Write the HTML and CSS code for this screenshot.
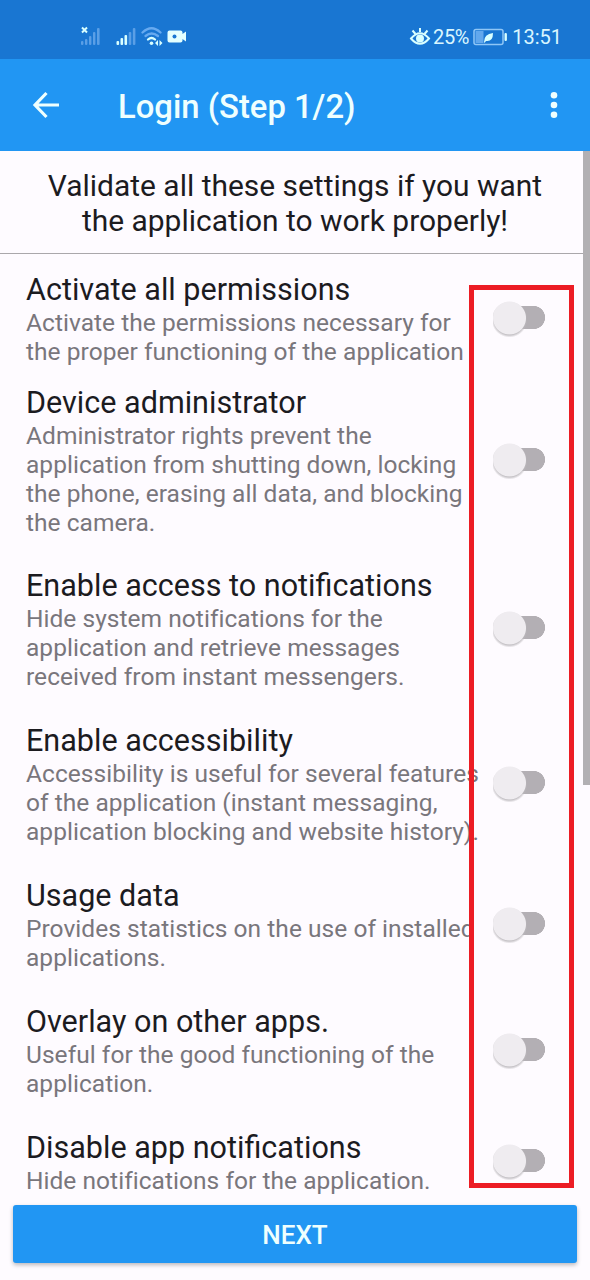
FILE: index.html
```html
<!DOCTYPE html>
<html lang="en">
<head>
<meta charset="utf-8">
<title>Login</title>
<link rel="stylesheet" href="styles.css">
</head>
<body>
<div class="screen">
  <header class="status">
    <svg class="status-left" width="110" height="28" viewBox="0 0 110 28" fill="none">
      <g stroke="#d9ffff" stroke-width="2"><path d="M2 3.500l5 5M7 3.500l-5 5"/></g>
      <g fill="#5a9fe6"><rect x="1" y="17" width="2.4" height="4" rx="1"/><rect x="5" y="15" width="2.4" height="6" rx="1"/><rect x="9" y="12" width="2.4" height="9" rx="1"/><rect x="13" y="8" width="2.4" height="13" rx="1"/><rect x="17" y="4" width="2.6" height="17" rx="1"/></g>
      <g fill="#d9ffff"><rect x="36.500" y="17" width="2.6" height="4" rx="1"/><rect x="40.500" y="14" width="2.600" height="7" rx="1"/><rect x="44.500" y="11" width="2.600" height="10" rx="1"/></g>
      <g fill="#5a9fe6"><rect x="48.700" y="8" width="2.600" height="13" rx="1"/><rect x="52.800" y="4" width="2.600" height="17" rx="1"/></g>
      <g stroke-width="2.300" stroke-linecap="round"><path d="M62.500 8.500Q71.500 0 80.500 8.500" stroke="#67aaf0"/><path d="M65.500 12Q71.500 7 78 12" stroke="#67aaf0"/><path d="M68 15.500Q71.500 12.500 75 15.500" stroke="#d9ffff"/></g>
      <circle cx="71.500" cy="19.300" r="1.800" fill="#d9ffff"/>
      <path d="M78 16v6l-3-3zM79.500 16v6l3-3z" fill="#d9ffff"/>
      <path d="M89.500 6.500h11q2 0 2 2v1.500l3.500-2.500v10L102.500 15v1.500q0 2-2 2h-11q-2 0-2-2V8.500q0-2 2-2z" fill="#e4ffff"/><circle cx="94.500" cy="12.500" r="2" fill="#1976d2"/>
    </svg>
    <div class="status-right">
      <svg width="22" height="22" viewBox="0 0 22 22" fill="none" stroke="#d9ffff" stroke-width="2"><path d="M2 12.500Q11 2 20 12.500Q11 23 2 12.500z"/><circle cx="11" cy="12.500" r="3" fill="#d9ffff"/><path d="M11 2v4M3.500 4.500l3 3.500M18.500 4.500l-3 3.500"/></svg>
      <span class="percent">25%</span>
      <svg class="battery" width="35" height="18" viewBox="0 0 35 18"><rect x="1" y="1.500" width="29" height="15" rx="2" fill="none" stroke="#8fc6f6" stroke-width="1.500"/><rect x="2.500" y="3" width="8" height="12" fill="#62a8ed"/><path d="M11 14q0-8 9-9q0 9-7 8l-1.500 2z" fill="#d9ffff"/><rect x="31.500" y="5" width="2.400" height="8" rx="1" fill="#d9ffff"/></svg>
      <span class="clock">13:51</span>
    </div>
  </header>
  <div class="toolbar">
    <svg class="back" width="28" height="28" viewBox="0 0 28 28" fill="none" stroke="#effffe" stroke-width="3.200"><path d="M14.500 2L3 14L14.500 26M3 14H27"/></svg>
    <h1 class="page-title">Login (Step 1/2)</h1>
    <svg class="more" width="8" height="28" viewBox="0 0 8 28" fill="#effffe"><circle cx="4" cy="4.200" r="3.300"/><circle cx="4" cy="14" r="3.300"/><circle cx="4" cy="23.800" r="3.300"/></svg>
  </div>
  <p class="intro">Validate all these settings if you want<br>the application to work properly!</p>
  <main class="settings">
    <section class="row tight"><div class="copy"><h2 class="name">Activate all permissions</h2><p class="desc">Activate the permissions necessary for<br>the proper functioning of the application</p></div><span class="switch"></span></section>
    <section class="row second"><div class="copy"><h2 class="name">Device administrator</h2><p class="desc">Administrator rights prevent the<br>application from shutting down, locking<br>the phone, erasing all data, and blocking<br>the camera.</p></div><span class="switch"></span></section>
    <section class="row"><div class="copy"><h2 class="name">Enable access to notifications</h2><p class="desc">Hide system notifications for the<br>application and retrieve messages<br>received from instant messengers.</p></div><span class="switch"></span></section>
    <section class="row"><div class="copy"><h2 class="name">Enable accessibility</h2><p class="desc">Accessibility is useful for several features<br>of the application (instant messaging,<br>application blocking and website history).</p></div><span class="switch"></span></section>
    <section class="row"><div class="copy"><h2 class="name">Usage data</h2><p class="desc">Provides statistics on the use of installed<br>applications.</p></div><span class="switch"></span></section>
    <section class="row"><div class="copy"><h2 class="name">Overlay on other apps.</h2><p class="desc">Useful for the good functioning of the<br>application.</p></div><span class="switch"></span></section>
    <section class="row"><div class="copy"><h2 class="name">Disable app notifications</h2><p class="desc">Hide notifications for the application.</p></div><span class="switch"></span></section>
  </main>
  <button class="next">NEXT</button>
  <div class="scrollbar"></div>
  <div class="highlight"></div>
</div>
</body>
</html>
```
FILE: styles.css
```css
* { box-sizing: border-box; margin: 0; padding: 0; }
body { font-family: Roboto, sans-serif; background: #fefbff; }
.screen { position: relative; width: 590px; height: 1280px; overflow: hidden; display: flex; flex-direction: column; color: #1c1b1f; }
.status { height: 59px; flex: none; background: #1976d2; display: flex; justify-content: space-between; align-items: flex-start; padding: 24px 28px 0 80px; color: #d9f6ff; }
.status-right { display: flex; align-items: center; height: 26px; font-size: 20px; }
.percent { margin-left: 2px; letter-spacing: -0.3px; }
.battery { margin: 0 4px; }
.toolbar { height: 92px; flex: none; background: #2196f3; display: flex; align-items: center; padding: 0 32px; }
.page-title { flex: 1; margin-left: 58px; padding-top: 3px; font-size: 32.8px; font-weight: 500; line-height: 40px; color: #effffe; white-space: nowrap; }
.intro { height: 103px; flex: none; padding-top: 17px; text-align: center; font-size: 29.95px; line-height: 35px; border-bottom: 1px solid #aaa7ab; white-space: nowrap; }
.settings { flex: none; height: 951px; padding: 19px 44px 0 26px; }
.row { display: flex; justify-content: space-between; align-items: center; margin-bottom: 33px; }
.tight { margin-bottom: 20px; }
.second { margin-bottom: 32px; }
.copy { width: 440px; white-space: nowrap; }
.name { padding-bottom: 2px; font-size: 30.55px; font-weight: 400; line-height: 33px; }
.desc { font-size: 24.5px; line-height: 29px; letter-spacing: 0.04px; color: #79767c; }
.switch { flex: none; width: 53px; height: 36px; margin-top: -2px; background: radial-gradient(circle at 16.5px 17px, #efecf0 0 16px, transparent 17px), radial-gradient(circle at 16.5px 18.5px, #bbb8bc 15px, transparent 18px), linear-gradient(#b3afb4, #b3afb4) 15px 5px / 26px 23px no-repeat, radial-gradient(circle at 40.5px 16.5px, #b3afb4 11.3px, transparent 11.8px); }
.next { flex: none; width: 564px; height: 58px; margin: 0 13px; padding-top: 3px; border: 0; border-radius: 3px; background: #2196f3; color: #effffe; font: 500 26px/55px Roboto, sans-serif; box-shadow: 0 2px 4px #0004; }
.scrollbar { position: absolute; right: 0; top: 151px; width: 7px; height: 634px; background: #b2b0b3; }
.highlight { position: absolute; left: 469px; top: 285px; width: 105px; height: 903px; border: 5px solid #ec1c24; }
```
